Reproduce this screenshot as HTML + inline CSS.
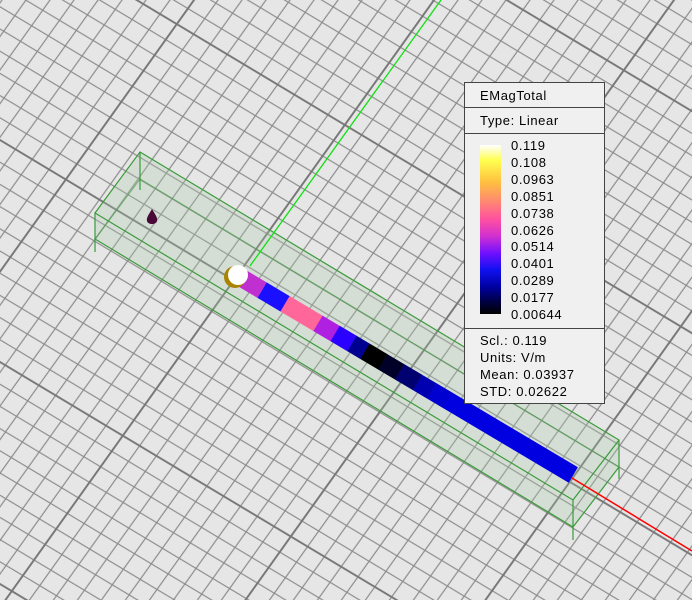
<!DOCTYPE html>
<html><head><meta charset="utf-8"><style>
html,body{margin:0;padding:0;}
body{width:692px;height:600px;overflow:hidden;position:relative;background:#e6e6e6;font-family:"Liberation Sans",Arial,sans-serif;}
svg{position:absolute;left:0;top:0;}
#leg{position:absolute;left:464px;top:82px;width:139px;height:320px;background:#f0f0f0;border:1px solid #444;font-size:13px;letter-spacing:0.6px;color:#000;}
#leg .t{position:absolute;left:15px;white-space:nowrap;}
.sep{position:absolute;left:0;width:139px;height:1px;background:#444;}
#bar{position:absolute;left:15px;top:62px;width:21px;height:169px;background:linear-gradient(to bottom,#ffffff 0%,#ffff50 9%,#ffc040 22%,#ff8a70 33%,#ff50a0 44%,#d030d0 54%,#7010ff 64%,#1010f0 74%,#0000a0 84%,#000040 93%,#000000 100%);}
.lb{position:absolute;left:46px;line-height:14px;white-space:nowrap;}
</style></head><body>
<svg width="692" height="600" viewBox="0 0 692 600">
<defs>
<pattern id="g" patternUnits="userSpaceOnUse" x="0" y="0" width="10" height="10" patternTransform="matrix(16.8 10.08 -11.1 15.54 -45.2 334.9)">
<g fill="#8a8a8a">
<rect x="0.97" y="0" width="0.06" height="10"/><rect x="1.97" y="0" width="0.06" height="10"/><rect x="2.97" y="0" width="0.06" height="10"/><rect x="3.97" y="0" width="0.06" height="10"/><rect x="4.97" y="0" width="0.06" height="10"/><rect x="5.97" y="0" width="0.06" height="10"/><rect x="6.97" y="0" width="0.06" height="10"/><rect x="7.97" y="0" width="0.06" height="10"/><rect x="8.97" y="0" width="0.06" height="10"/>
<rect y="0.97" x="0" height="0.06" width="10"/><rect y="1.97" x="0" height="0.06" width="10"/><rect y="2.97" x="0" height="0.06" width="10"/><rect y="3.97" x="0" height="0.06" width="10"/><rect y="4.97" x="0" height="0.06" width="10"/><rect y="5.97" x="0" height="0.06" width="10"/><rect y="6.97" x="0" height="0.06" width="10"/><rect y="7.97" x="0" height="0.06" width="10"/><rect y="8.97" x="0" height="0.06" width="10"/>
</g>
<g fill="#777">
<rect x="0" y="0" width="0.05" height="10"/><rect x="9.95" y="0" width="0.05" height="10"/>
<rect x="0" y="0" width="10" height="0.05"/><rect x="0" y="9.95" width="10" height="0.05"/>
</g>
</pattern>
</defs>
<rect width="692" height="600" fill="#e6e6e6"/>
<rect width="692" height="600" fill="url(#g)"/>
<polygon points="140,152 619,440 619,467 573,527 95,239 95,213" fill="rgba(170,200,170,0.28)"/>
<g stroke="#3a9a3a" stroke-width="1.2" fill="none">
<polygon points="140,152 619,440 573,500 95,213"/>
<line x1="95" y1="239" x2="573" y2="527"/>
<line x1="573" y1="527" x2="619" y2="467"/>
<line x1="140" y1="179" x2="619" y2="467" stroke-opacity="0.6"/>
<line x1="95" y1="213" x2="95" y2="252"/>
<line x1="140" y1="152" x2="140" y2="190"/>
<line x1="573" y1="500" x2="573" y2="540"/>
<line x1="619" y1="440" x2="619" y2="479"/>
<line x1="95" y1="239" x2="140" y2="179" stroke-opacity="0.6"/>
</g>
<line x1="250" y1="266" x2="441" y2="0" stroke="#10e010" stroke-width="1.3"/>
<line x1="572" y1="478" x2="692" y2="551" stroke="#ff0000" stroke-width="1.5"/>
<g transform="translate(250,283) rotate(30.7)">
<rect x="-8" y="-9" width="22" height="18" fill="#c030d0"/>
<rect x="14" y="-9" width="27" height="18" fill="#1a10ff"/>
<rect x="40.7" y="-9" width="38.5" height="18" fill="#ff6699"/>
<rect x="79" y="-9" width="20.3" height="18" fill="#b020e0"/>
<rect x="99" y="-9" width="19.8" height="18" fill="#2a00ff"/>
<rect x="118.6" y="-9" width="15.3" height="18" fill="#000090"/>
<rect x="133.7" y="-9" width="21.1" height="18" fill="#000000"/>
<rect x="154.6" y="-9" width="19.6" height="18" fill="#000028"/>
<rect x="174" y="-9" width="21.2" height="18" fill="#000070"/>
<rect x="195" y="-9" width="16.8" height="18" fill="#0000b0"/>
<rect x="211.6" y="-9" width="18.6" height="18" fill="#0000d0"/>
<rect x="230" y="-9" width="146" height="18" fill="#0000e0"/>
</g>
<circle cx="235" cy="277" r="11" fill="#a88400"/>
<circle cx="238" cy="275" r="10" fill="#ffffff"/>
<path d="M152,209 C149,214 146,218 147,221 C148,225 156,225 157,221 C158,218 155,214 152,209 Z" fill="#4a0838"/>
</svg>
<div id="leg">
<div class="t" style="top:5px">EMagTotal</div>
<div class="sep" style="top:24px"></div>
<div class="t" style="top:30px">Type: Linear</div>
<div class="sep" style="top:50px"></div>
<div id="bar"></div>
<div class="lb" style="top:56px">0.119</div>
<div class="lb" style="top:73px">0.108</div>
<div class="lb" style="top:90px">0.0963</div>
<div class="lb" style="top:107px">0.0851</div>
<div class="lb" style="top:124px">0.0738</div>
<div class="lb" style="top:141px">0.0626</div>
<div class="lb" style="top:157px">0.0514</div>
<div class="lb" style="top:174px">0.0401</div>
<div class="lb" style="top:191px">0.0289</div>
<div class="lb" style="top:208px">0.0177</div>
<div class="lb" style="top:225px">0.00644</div>
<div class="sep" style="top:245px"></div>
<div class="t" style="top:250px">Scl.: 0.119</div>
<div class="t" style="top:267px">Units: V/m</div>
<div class="t" style="top:284px">Mean: 0.03937</div>
<div class="t" style="top:301px">STD: 0.02622</div>
</div>
</body></html>
